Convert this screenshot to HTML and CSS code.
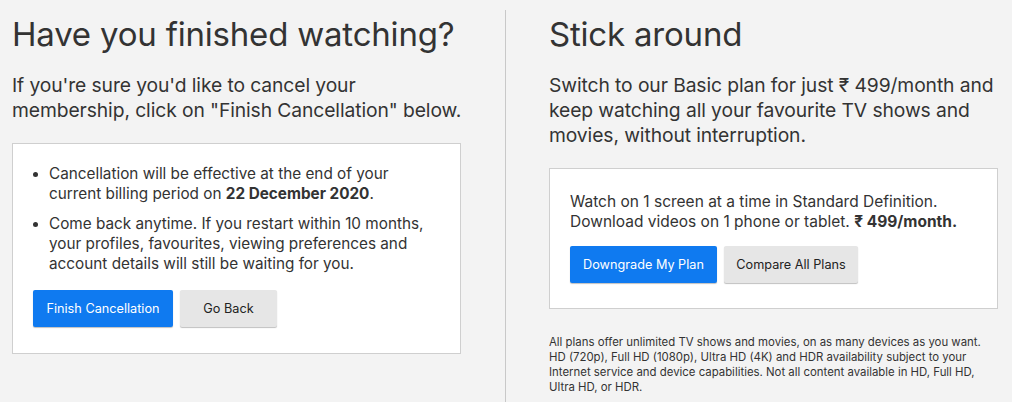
FILE: index.html
```html
<!DOCTYPE html>
<html>
<head>
<meta charset="utf-8">
<link rel="stylesheet" href="styles.css">
</head>
<body>
<div class="page">
  <section class="col col-left">
    <h1 class="title">Have you finished watching?</h1>
    <p class="lead lead-left">If you're sure you'd like to cancel your<br>membership, click on "Finish Cancellation" below.</p>
    <div class="card card-left">
      <ul class="points">
        <li>Cancellation will be effective at the end of your current billing period on <b>22 December 2020</b>.</li>
        <li>Come back anytime. If you restart within 10 months, your profiles, favourites, viewing preferences and account details will still be waiting for you.</li>
      </ul>
      <div class="actions">
        <button class="btn btn-primary btn-finish">Finish Cancellation</button>
        <button class="btn btn-secondary btn-back">Go Back</button>
      </div>
    </div>
  </section>
  <section class="col col-right">
    <h1 class="title">Stick around</h1>
    <p class="lead">Switch to our Basic plan for just ₹ 499/month and keep watching all your favourite TV shows and movies, without interruption.</p>
    <div class="card card-right">
      <p class="plan">Watch on 1 screen at a time in Standard Definition. Download videos on 1 phone or tablet. <b>₹ 499/month.</b></p>
      <div class="actions">
        <button class="btn btn-primary btn-down">Downgrade My Plan</button>
        <button class="btn btn-secondary btn-compare">Compare All Plans</button>
      </div>
    </div>
    <p class="fine">All plans offer unlimited TV shows and movies, on as many devices as you want. HD (720p), Full HD (1080p), Ultra HD (4K) and HDR availability subject to your Internet service and device capabilities. Not all content available in HD, Full HD, Ultra HD, or HDR.</p>
  </section>
</div>
</body>
</html>
```

FILE: styles.css
```css
html, body {
  margin: 0;
  padding: 0;
  background: #f3f3f3;
  color: #333;
  font-family: "Inter", "Noto Sans", sans-serif;
}
.page {
  display: grid;
  grid-template-columns: 505px 1fr;
  height: 402px;
  overflow: hidden;
}
.col {
  padding-top: 14px;
}
.col-left {
  padding-left: 12px;
  padding-right: 44px;
}
.col-right {
  border-left: 1px solid #c8c8c8;
  margin-top: 10px;
  padding-top: 4px;
  padding-left: 43px;
  padding-right: 14px;
}
.title {
  margin: 0;
  font-size: 33px;
  font-weight: 400;
  line-height: 40px;
  letter-spacing: -0.2px;
}
.lead {
  margin: 19px 0 0;
  font-size: 19.3px;
  line-height: 25px;
  letter-spacing: -0.1px;
}
.lead-left {
  white-space: nowrap;
}
.card {
  background: #fff;
  border: 1px solid #cfcfcf;
}
.card-left {
  margin-top: 20px;
  height: 211px;
  padding: 20px 20px 0;
  box-sizing: border-box;
}
.card-right {
  margin-top: 20px;
  height: 141px;
  padding: 23px 20px 0;
  box-sizing: border-box;
}
.points {
  margin: 0;
  padding-left: 16px;
  font-size: 15.3px;
  line-height: 20px;
}
.points li {
  margin-bottom: 10px;
  padding-left: 0;
}
.points li::marker {
  font-size: 14px;
}
.plan {
  margin: 0;
  font-size: 15.5px;
  line-height: 20px;
}
.actions {
  display: flex;
  gap: 7px;
  margin-top: 16px;
}
.card-right .actions {
  margin-top: 14px;
}
.btn {
  height: 37px;
  border: none;
  border-radius: 2px;
  font-family: inherit;
  font-size: 12.7px;
  padding: 0;
  white-space: nowrap;
  box-shadow: 0 1px 1px rgba(0,0,0,0.25);
}
.btn-primary {
  background: #0f7af0;
  color: #fff;
}
.btn-secondary {
  background: #e6e6e6;
  color: #222;
}
.btn-finish { width: 140px; }
.btn-back { width: 97px; }
.btn-down { width: 147px; }
.btn-compare { width: 134px; }
.fine {
  margin: 26px 0 0;
  font-size: 11.4px;
  line-height: 15px;
  color: #333;
}
```
